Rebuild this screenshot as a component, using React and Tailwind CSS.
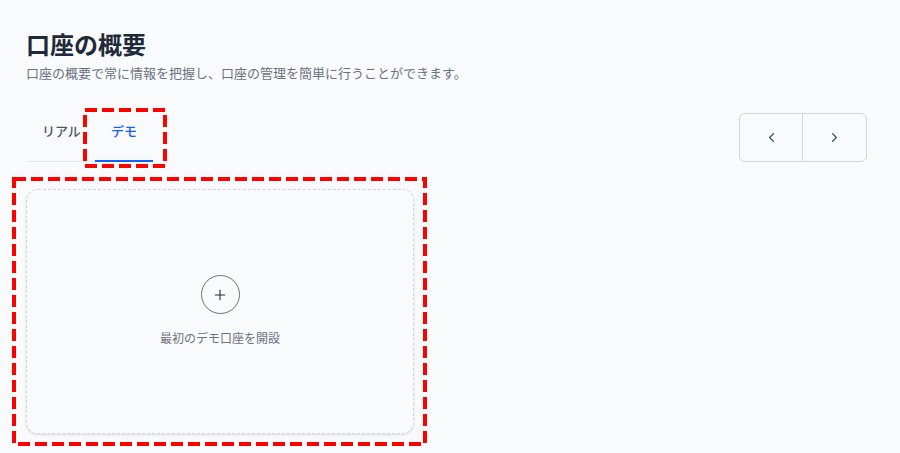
import React from 'react';
import { ChevronLeft, ChevronRight, Plus } from 'lucide-react';

// annotation boxes drawn over the page
const Highlights = () => (
  <svg className="absolute inset-0 pointer-events-none" width="900" height="453">
    <rect x="85" y="110" width="80" height="56" fill="none" stroke="#ff0000" strokeWidth="4" strokeDasharray="12 5" />
    <rect x="14" y="179" width="411" height="265" fill="none" stroke="#ff0000" strokeWidth="4" strokeDasharray="12 5" />
  </svg>
);

export default function App() {
  const tabs = ['リアル', 'デモ'];
  const activo = 'デモ';

  return (
    <div className="relative min-h-screen bg-gray-50 font-['Noto_Sans_CJK_JP','Noto_Sans',sans-serif]">
      <div className="pl-[26px] pr-[33px] pt-[28px]">
        <h1 className="text-2xl leading-[32px] font-bold text-gray-800">口座の概要</h1>
        <p className="mt-[3px] text-[13px] leading-5 text-gray-500">
          口座の概要で常に情報を把握し、口座の管理を簡単に行うことができます。
        </p>

        <div className="mt-[30px] flex items-end justify-between">
          <div className="flex border-b border-gray-200">
            {tabs.map((t) => (
              <button
                key={t}
                className={
                  t === activo
                    ? '-mb-px px-4 pb-[19px] text-[13px] leading-5 font-medium text-blue-600 border-b-2 border-blue-600'
                    : '-mb-px pl-4 pr-[14px] pb-[19px] text-[13px] leading-5 font-medium text-gray-600 border-b-2 border-transparent'
                }
              >
                {t}
              </button>
            ))}
          </div>
          <div className="flex h-[49px] rounded-md border border-gray-300">
            <button className="flex w-[63px] items-center justify-center border-r border-gray-300 text-gray-600">
              <ChevronLeft size={15} strokeWidth={2.2} />
            </button>
            <button className="flex w-[63px] items-center justify-center text-gray-600">
              <ChevronRight size={15} strokeWidth={2.2} />
            </button>
          </div>
        </div>

        <div className="mt-[27px] flex h-[245px] w-[388px] flex-col items-center justify-center rounded-xl border border-dashed border-gray-300 shadow-sm">
          <div className="flex h-[39px] w-[39px] items-center justify-center rounded-full border border-gray-500 text-gray-800">
            <Plus size={16} strokeWidth={1.6} />
          </div>
          <span className="mt-[14px] text-xs leading-5 text-gray-500">最初のデモ口座を開設</span>
        </div>
      </div>
      <Highlights />
    </div>
  );
}
